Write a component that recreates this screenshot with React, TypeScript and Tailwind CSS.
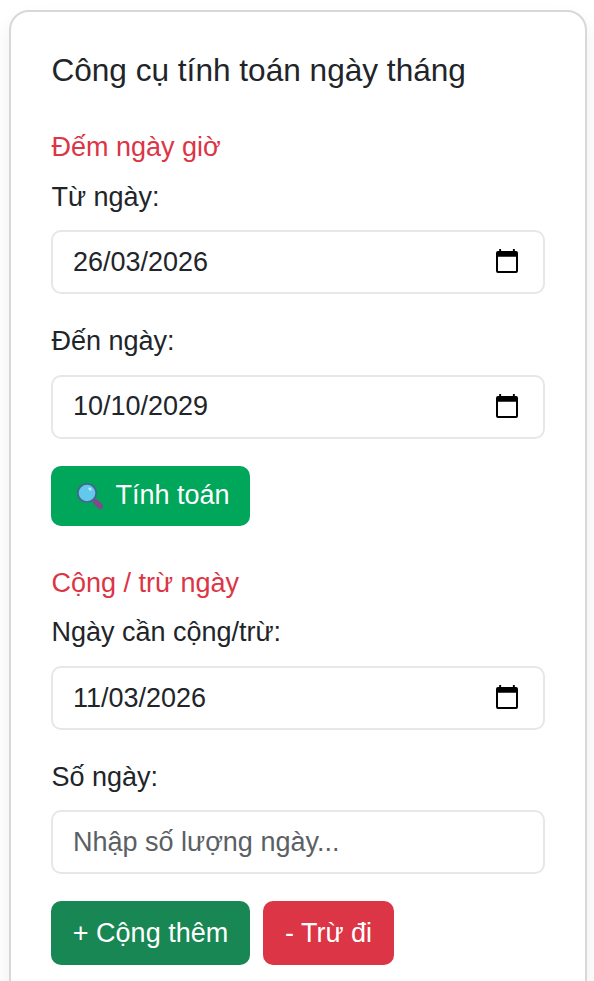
import type { ReactNode } from "react";

const CalendarIcon = () => (
  <svg width="22" height="24" viewBox="0 0 22 24" className="shrink-0 mb-[2px]">
    <path
      fill="#000"
      fillRule="evenodd"
      d="M3.2 0h1.9v2h11.8V0h1.9v2h1.2a2 2 0 0 1 2 2v18a2 2 0 0 1-2 2H2a2 2 0 0 1-2-2V4a2 2 0 0 1 2-2h1.2zM2 7.8v14.1h18V7.8z"
    />
  </svg>
);

const SearchIcon = () => (
  <svg width="28" height="28" viewBox="0 0 28 28" className="shrink-0">
    <path d="M17 17l3 3" stroke="#4d5578" strokeWidth="3" />
    <path d="M20 20l4.3 4.3" stroke="#84478f" strokeWidth="5.5" strokeLinecap="round" />
    <circle cx="11" cy="11" r="9.2" fill="#62c8ec" stroke="#46658f" strokeWidth="1.8" />
    <ellipse cx="14" cy="7" rx="1.8" ry="1.3" fill="#c5effb" transform="rotate(40 14 7)" />
  </svg>
);

const Field = ({ label, children }: { label: string; children: ReactNode }) => (
  <div className="mb-[27px]">
    <div className="h-[40px] leading-[40px] mb-[13.5px] pl-[0.4px]">{label}</div>
    <div className="flex items-center justify-between h-[64px] pl-[20px] pr-[25px] rounded-[10px] border-2 border-[#e5e7e9]">
      {children}
    </div>
  </div>
);

const DateField = ({ label, value }: { label: string; value: string }) => (
  <Field label={label}>
    <span>{value}</span>
    <CalendarIcon />
  </Field>
);

export default function App() {
  return (
    <div className="h-[981px] overflow-hidden bg-white pt-[10px] pl-[9px] font-['Liberation_Sans',sans-serif] text-[27px] text-[#212529]">
      <div className="w-[578px] h-[1100px] rounded-[20px] border-2 border-[#d8d8d8] px-[40px] pt-[38px] shadow-[0_10px_20px_rgba(0,0,0,0.07)]">
        <h1 className="text-[31.6px] leading-[40px] mb-[36.7px] pl-[0.4px]">Công cụ tính toán ngày tháng</h1>
        <h2 className="text-[#dc3545] leading-[40px] mb-[10px] pl-[0.4px]">Đếm ngày giờ</h2>
        <DateField label="Từ ngày:" value="26/03/2026" />
        <DateField label="Đến ngày:" value="10/10/2029" />
        <button className="flex items-center gap-[11px] w-[199px] h-[60px] pl-[25.4px] rounded-[10px] bg-[#00a65a] text-white">
          <SearchIcon />
          Tính toán
        </button>
        <h2 className="text-[#dc3545] leading-[40px] mt-[37px] mb-[9.8px] pl-[0.4px]">Cộng / trừ ngày</h2>
        <DateField label="Ngày cần cộng/trừ:" value="11/03/2026" />
        <Field label="Số ngày:">
          <span className="text-[#5b6065]">Nhập số lượng ngày...</span>
        </Field>
        <div className="flex gap-[13px]">
          <button className="w-[199px] h-[64px] rounded-[10px] bg-[#198754] text-white">+ Cộng thêm</button>
          <button className="w-[131px] h-[64px] rounded-[10px] bg-[#dc3545] text-white">- Trừ đi</button>
        </div>
      </div>
    </div>
  );
}
